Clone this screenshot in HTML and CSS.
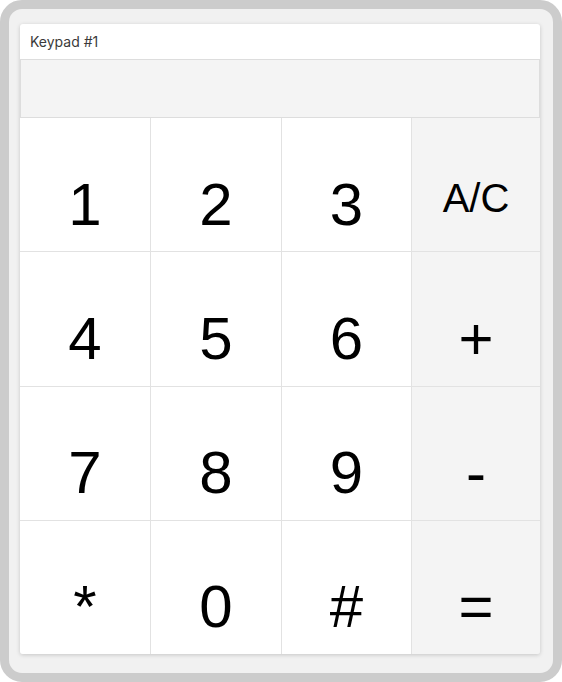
FILE: index.html
```html
<!DOCTYPE html>
<html>
<head>
<meta charset="utf-8">
<link rel="stylesheet" href="styles.css">
</head>
<body>
<div class="frame">
  <div class="card">
    <div class="header">Keypad #1</div>
    <div class="display"></div>
    <div class="keys">
      <div class="key">1</div>
      <div class="key">2</div>
      <div class="key">3</div>
      <div class="key op ac">A/C</div>
      <div class="key">4</div>
      <div class="key">5</div>
      <div class="key">6</div>
      <div class="key op">+</div>
      <div class="key">7</div>
      <div class="key">8</div>
      <div class="key">9</div>
      <div class="key op">-</div>
      <div class="key">*</div>
      <div class="key">0</div>
      <div class="key">#</div>
      <div class="key op">=</div>
    </div>
  </div>
</div>
</body>
</html>
```
FILE: styles.css
```css
html, body {
  margin: 0;
  padding: 0;
  background: #ffffff;
}
.frame {
  box-sizing: border-box;
  width: 562px;
  height: 682px;
  border: 9px solid #cccccc;
  border-radius: 22px;
  background: #f1f1f1;
  padding: 15px 13px 0 11px;
}
.card {
  background: #ffffff;
  border-radius: 3px;
  box-shadow: 0 1px 4px rgba(0,0,0,0.18);
  overflow: hidden;
  height: 630px;
  display: flex;
  flex-direction: column;
}
.header {
  height: 35px;
  box-sizing: border-box;
  padding: 9px 0 0 10px;
  font-family: Inter, "Liberation Sans", sans-serif;
  font-size: 14px;
  color: #3a3a3a;
  line-height: 17px;
}
.display {
  height: 57px;
  background: #f4f4f4;
  border: 1px solid #dddddd;
}
.keys {
  flex: 1;
  display: grid;
  grid-template-columns: 130px 130px 129px 1fr;
  grid-template-rows: repeat(4, 1fr);
  gap: 1px;
  background: #e2e2e2;
}
.key {
  background: #ffffff;
  display: flex;
  align-items: center;
  justify-content: center;
  padding-top: 39px;
  box-sizing: border-box;
  font-family: "Liberation Sans", Arial, sans-serif;
  font-size: 60px;
  line-height: 69px;
  color: #000000;
}
.key.op {
  background: #f4f4f4;
}
.key.ac {
  font-size: 40px;
  line-height: 46px;
  padding-top: 27px;
}
```
